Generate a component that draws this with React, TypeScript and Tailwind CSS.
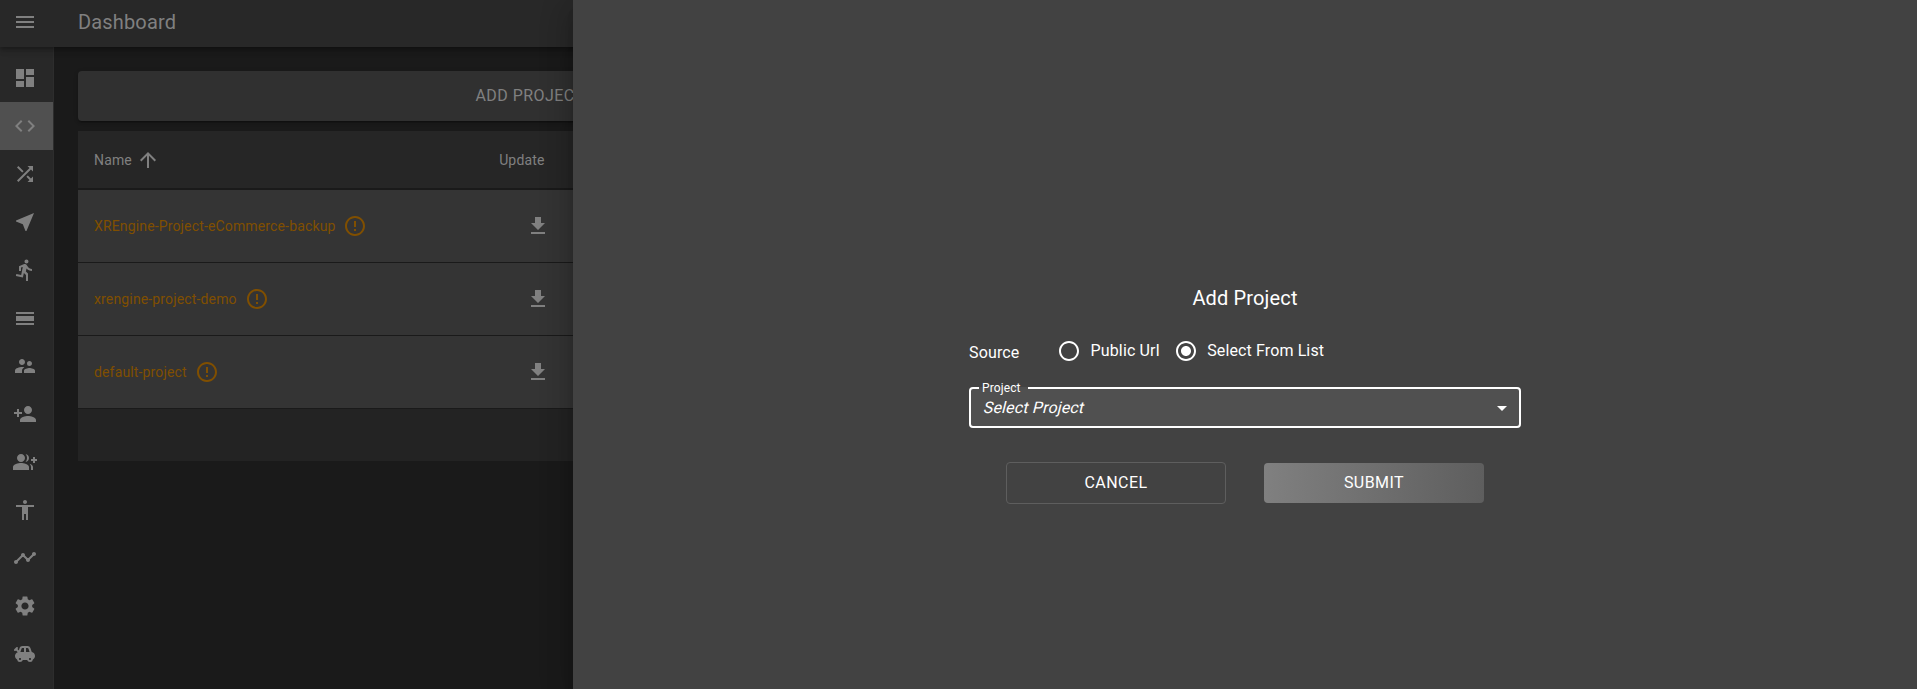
import type { ReactNode } from 'react';
import {
  MdAccessibility,
  MdArrowDropDown,
  MdArrowUpward,
  MdCode,
  MdDashboard,
  MdDirectionsRun,
  MdErrorOutline,
  MdGetApp,
  MdGroupAdd,
  MdMenu,
  MdNearMe,
  MdPersonAdd,
  MdRadioButtonChecked,
  MdRadioButtonUnchecked,
  MdSettings,
  MdShuffle,
  MdSupervisorAccount,
  MdTimeline,
  MdToys,
} from 'react-icons/md';

function DayViewIcon() {
  return (
    <svg width="24" height="24" viewBox="0 0 24 24" fill="currentColor">
      <path d="M3 17h18v2H3v-2zm0-7h18v5H3v-5zm0-4h18v2H3V6z" />
    </svg>
  );
}

const navItems: { id: string; icon: ReactNode }[] = [
  { id: 'dashboard', icon: <MdDashboard size={24} /> },
  { id: 'projects', icon: <MdCode size={24} /> },
  { id: 'routes', icon: <MdShuffle size={24} /> },
  { id: 'locations', icon: <MdNearMe size={24} /> },
  { id: 'instances', icon: <MdDirectionsRun size={24} /> },
  { id: 'parties', icon: <DayViewIcon /> },
  { id: 'users', icon: <MdSupervisorAccount size={24} /> },
  { id: 'invites', icon: <MdPersonAdd size={24} /> },
  { id: 'groups', icon: <MdGroupAdd size={24} /> },
  { id: 'avatars', icon: <MdAccessibility size={24} /> },
  { id: 'benchmarking', icon: <MdTimeline size={24} /> },
  { id: 'settings', icon: <MdSettings size={24} /> },
  { id: 'bots', icon: <MdToys size={24} /> },
];

const projects = ['XREngine-Project-eCommerce-backup', 'xrengine-project-demo', 'default-project'];

function Sidebar() {
  return (
    <nav className="flex w-[54px] shrink-0 flex-col border-r border-[#2d2d2d] bg-[#282828] pt-[7px] text-[#808080]">
      {navItems.map(({ id, icon }) => (
        <a
          key={id}
          className={`flex h-12 shrink-0 items-center pl-[13px] ${id === 'projects' ? 'bg-[#505050]' : ''}`}
        >
          {icon}
        </a>
      ))}
    </nav>
  );
}

function ProjectTable() {
  return (
    <div className="mt-[10px] w-[1803px] text-sm tracking-[0.01071em]">
      <div className="flex h-[59px] items-center border-b-2 border-[#1a1a1a] bg-[#262626] text-[#808080]">
        <div className="flex w-[346px] items-center pl-4">
          Name
          <MdArrowUpward size={24} className="ml-1" />
        </div>
        <div className="flex w-[120.5px] justify-end">Update</div>
      </div>
      {projects.map((name) => (
        <div key={name} className="flex h-[73px] items-center border-b border-[#1a1a1a] bg-[#343434]">
          <div className="flex w-[346px] items-center pl-4 text-[#804f00]">
            <span>{name}</span>
            <MdErrorOutline size={24} className="ml-[7.8px]" />
          </div>
          <div className="flex w-[126px] justify-end text-[#808080]">
            <MdGetApp size={24} />
          </div>
        </div>
      ))}
      <div className="h-[52px] bg-[#232323]" />
    </div>
  );
}

function AddProjectDrawer() {
  return (
    <aside className="absolute inset-y-0 right-0 left-[573px] z-20 flex justify-center bg-[#424242] text-white shadow-[0px_8px_10px_-5px_rgba(0,0,0,0.2),0px_16px_24px_2px_rgba(0,0,0,0.14),0px_6px_30px_5px_rgba(0,0,0,0.12)]">
      <div className="flex w-[552px] flex-col pt-[282px]">
        <h2 className="text-center text-xl leading-8 tracking-[0.0075em]">Add Project</h2>
        <div className="mt-4 flex h-[42px] items-center">
          <span className="w-[88px] pt-1 text-base leading-6 tracking-[0.15px]">Source</span>
          <label className="flex items-center text-base leading-6 tracking-[0.15px]">
            <MdRadioButtonUnchecked size={24} className="mr-[9.5px]" />
            Public Url
          </label>
          <label className="ml-[14.5px] flex items-center text-base leading-6 tracking-[0.12px]">
            <MdRadioButtonChecked size={24} className="mr-[9px]" />
            Select From List
          </label>
        </div>
        <div className="relative mt-[15px] flex h-[41px] items-center justify-between rounded bg-[#505050] pr-[7px] pl-[15px]">
          <em className="inline-block -skew-x-[14deg] text-base leading-6 tracking-[0.15px] not-italic">
            Select Project
          </em>
          <MdArrowDropDown size={24} />
          <fieldset className="absolute inset-x-0 -top-[5px] bottom-0 rounded border-2 border-white px-2">
            <legend className="h-[11px] w-[49px]" />
          </fieldset>
          <span className="absolute -top-[7px] left-[13px] text-xs leading-[17px] tracking-[0.11px]">Project</span>
        </div>
        <div className="mt-[34px] flex items-center justify-center gap-[38px] text-base tracking-[0.02857em]">
          <button className="h-[42px] w-[220px] rounded border border-[#5e5e5e]">CANCEL</button>
          <button className="h-10 w-[220px] rounded bg-[linear-gradient(92deg,#808080,#5e5e5e)]">SUBMIT</button>
        </div>
      </div>
    </aside>
  );
}

export default function App() {
  return (
    <div className="relative flex h-[689px] w-full flex-col overflow-hidden bg-[#1a1a1a] font-[Roboto,sans-serif]">
      <header className="z-10 flex h-[47px] shrink-0 items-center bg-[#282828] pl-[13px] text-[#808080] shadow-[0px_2px_4px_-1px_rgba(0,0,0,0.2),0px_4px_5px_0px_rgba(0,0,0,0.14),0px_1px_10px_0px_rgba(0,0,0,0.12)]">
        <MdMenu size={24} className="-mt-[3px]" />
        <h1 className="-mt-[3px] ml-[41px] text-xl tracking-[0.0075em]">Dashboard</h1>
      </header>
      <div className="flex min-h-0 flex-1">
        <Sidebar />
        <main className="shrink-0 px-6 pt-6">
          <button className="h-[50px] w-[904px] rounded bg-[#303030] text-base tracking-[0.02857em] text-[#808080] shadow-[0px_3px_1px_-2px_rgba(0,0,0,0.2),0px_2px_2px_0px_rgba(0,0,0,0.14),0px_1px_5px_0px_rgba(0,0,0,0.12)]">
            ADD PROJECT
          </button>
          <ProjectTable />
        </main>
      </div>
      <AddProjectDrawer />
    </div>
  );
}
